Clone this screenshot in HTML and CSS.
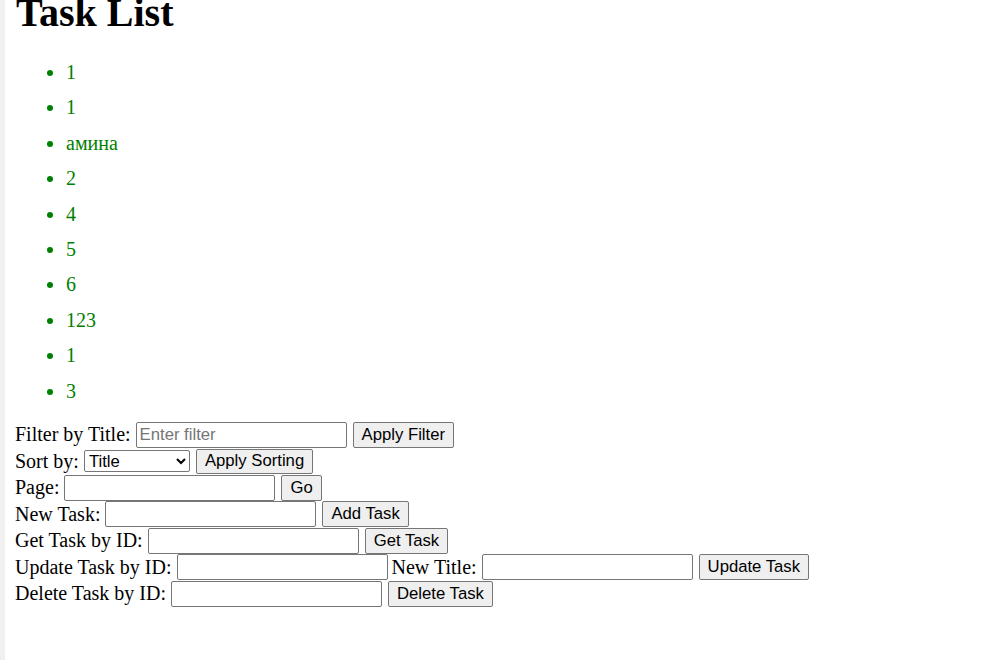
FILE: index.html
```html
<!DOCTYPE html>
<html lang="en">
  <head>
    <meta charset="UTF-8" />
    <meta name="viewport" content="width=device-width, initial-scale=1.0" />
    <title>Task List</title>
    <link rel="stylesheet" href="styles.css">
  </head>
  <body>
    <h1>Task List</h1>

    <!-- tasks -->
    <ul id="taskList" class="task-list">
      <li>1</li>
      <li>1</li>
      <li>амина</li>
      <li>2</li>
      <li>4</li>
      <li>5</li>
      <li>6</li>
      <li>123</li>
      <li>1</li>
      <li>3</li>
    </ul>

    <!-- controls -->
    <div class="row">
      <label for="filterInput">Filter by Title:</label>
      <input type="text" id="filterInput" placeholder="Enter filter" />
      <button id="applyFilter">Apply Filter</button>
    </div>
    <div class="row">
      <label for="sortSelect">Sort by:</label>
      <select id="sortSelect">
        <option value="title">Title</option>
        <option value="id">ID</option>
      </select>
      <button id="applySorting">Apply Sorting</button>
    </div>
    <div class="row">
      <label for="pageInput">Page:</label>
      <input type="text" id="pageInput" />
      <button id="goPage">Go</button>
    </div>
    <div class="row">
      <label for="newTask">New Task:</label>
      <input type="text" id="newTask" />
      <button id="addTask">Add Task</button>
    </div>
    <div class="row">
      <label for="getId">Get Task by ID:</label>
      <input type="text" id="getId" />
      <button id="getTask">Get Task</button>
    </div>
    <div class="row">
      <label for="updateId">Update Task by ID:</label>
      <input type="text" id="updateId" class="narrow-gap" />
      <label for="updateTitle">New Title:</label>
      <input type="text" id="updateTitle" />
      <button id="updateTask">Update Task</button>
    </div>
    <div class="row">
      <label for="deleteId">Delete Task by ID:</label>
      <input type="text" id="deleteId" />
      <button id="deleteTask">Delete Task</button>
    </div>
  </body>
</html>
```

FILE: styles.css
```css
/* page */
html {
  background-color: #fff;
}

body {
  margin: 0;
  padding: 0 0 0 10px;
  border-left: 5px solid #f0f0f0;
  min-height: 660px;
  box-sizing: border-box;
  font-family: "Liberation Serif", "Times New Roman", serif;
  font-size: 20px;
  color: #000;
}

h1 {
  font-size: 40px;
  margin: -11px 0 0 1px;
}

/* task list */
.task-list {
  margin: 25px 0 20px 0;
  padding-left: 51px;
  color: green;
}

.task-list li {
  line-height: 22px;
  margin-bottom: 13.4px;
}

.task-list li:last-child {
  margin-bottom: 0;
}

/* form rows */
.row {
  display: flex;
  align-items: center;
  height: 26.5px;
}

.row label {
  margin-right: 5px;
}

.row input {
  width: 211px;
  height: 26px;
  box-sizing: border-box;
  margin: 0 6px 0 0;
  border: 1px solid #767676;
  border-radius: 2px;
  padding: 1px 3px;
  font-family: "Liberation Sans", Arial, sans-serif;
  font-size: 16.7px;
}

.row input.narrow-gap {
  margin-right: 4px;
}

.row input::placeholder {
  color: #757575;
}

.row select {
  width: 106px;
  height: 22px;
  box-sizing: border-box;
  margin: 0 6px 0 0;
  border: 1px solid #767676;
  border-radius: 2px;
  font-family: "Liberation Sans", Arial, sans-serif;
  font-size: 16.7px;
  background-color: #fff;
}

.row button {
  height: 26px;
  box-sizing: border-box;
  padding: 0 8px;
  background-color: #efefef;
  border: 1px solid #767676;
  border-radius: 2px;
  font-family: "Liberation Sans", Arial, sans-serif;
  font-size: 16.7px;
  color: #000;
}

.row select + button {
  height: 25px;
}
```
